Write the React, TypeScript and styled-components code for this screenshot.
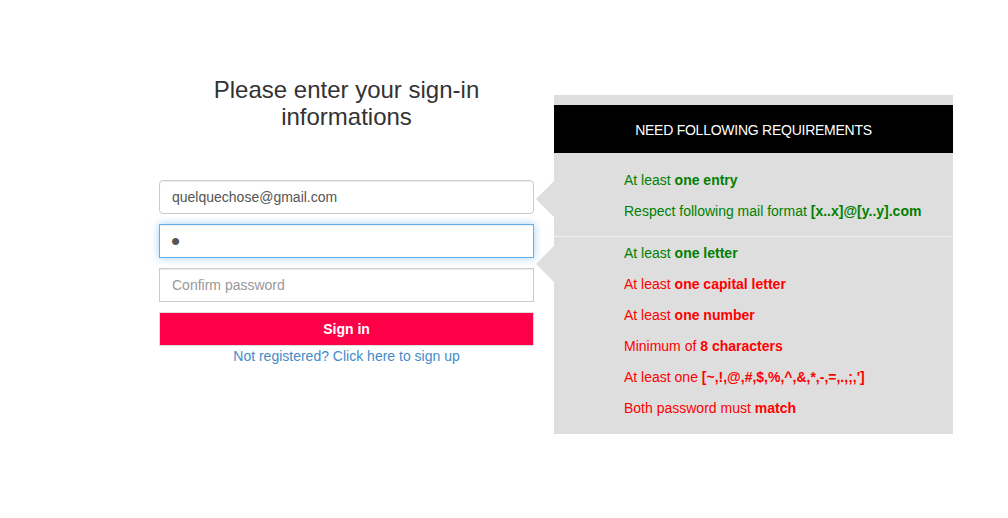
import React from "react";
import styled, { createGlobalStyle, css } from "styled-components";

const GlobalStyle = createGlobalStyle`
  html, body {
    margin: 0;
    padding: 0;
    background: #ffffff;
    font-family: "Liberation Sans", Arial, sans-serif;
    font-size: 14px;
    color: #333333;
  }
  * { box-sizing: border-box; }
`;

const Page = styled.div`
  display: flex;
  align-items: flex-start;
  padding-left: 159px;
  width: 1008px;
  height: 518px;
`;

const FormColumn = styled.div`
  width: 375px;
  padding-top: 77px;
  display: flex;
  flex-direction: column;
`;

const Title = styled.h3`
  margin: 0 auto 50px;
  width: 300px;
  font-size: 24px;
  line-height: 26.5px;
  font-weight: 400;
  text-align: center;
  color: #333333;
`;

const Fields = styled.div`
  display: flex;
  flex-direction: column;
  gap: 10px;
`;

const Input = styled.input<{ $rounded?: boolean; $focused?: boolean; $masked?: boolean }>`
  display: block;
  width: 100%;
  height: 34px;
  padding: ${(p) => (p.$masked ? "0 11px" : "6px 12px")};
  font-family: "Liberation Sans", Arial, sans-serif;
  font-size: ${(p) => (p.$masked ? "26px" : "14px")};
  color: #555555;
  background: #ffffff;
  border: 1px solid #cccccc;
  border-radius: ${(p) => (p.$rounded ? "4px" : "0")};
  box-shadow: inset 0 1px 1px rgba(0, 0, 0, 0.075);
  outline: none;
  &::placeholder { color: #999999; font-size: 14px; }
  ${(p) =>
    p.$focused &&
    css`
      border-color: #66afe9;
      box-shadow: inset 0 1px 1px rgba(0, 0, 0, 0.075),
        0 0 8px rgba(102, 175, 233, 0.6);
    `}
`;

const SubmitButton = styled.button`
  display: block;
  width: 100%;
  height: 34px;
  background: #ff0048;
  border: 1px solid #dcdcdc;
  color: #ffffff;
  font-family: "Liberation Sans", Arial, sans-serif;
  font-size: 14px;
  font-weight: 700;
  cursor: pointer;
`;

const SignUpLink = styled.a`
  display: block;
  text-align: center;
  color: #428bca;
  font-size: 14px;
  line-height: 20px;
  text-decoration: none;
`;

const Panel = styled.div`
  position: relative;
  margin-top: 95px;
  margin-left: 20px;
  width: 399px;
  background: #dedede;
  padding: 10px 0 10px;
`;

const PanelHeader = styled.div`
  height: 48px;
  padding-top: 2px;
  background: #000000;
  color: #ffffff;
  display: flex;
  align-items: center;
  justify-content: center;
  font-size: 14px;
  letter-spacing: -0.25px;
`;

const Group = styled.ul<{ $top: number; $bottom: number }>`
  list-style: none;
  margin: 0;
  padding: ${(p) => p.$top}px 0 ${(p) => p.$bottom}px 70px;
`;

const Separator = styled.div`
  height: 1px;
  background: #f2f2f2;
`;

const Rule = styled.li<{ $ok: boolean }>`
  height: 31px;
  line-height: 31px;
  font-size: 14px;
  color: ${(p) => (p.$ok ? "#008000" : "#ff0000")};
  b { font-weight: 700; }
`;

const Arrow = styled.div<{ $top: number }>`
  position: absolute;
  left: -18px;
  top: ${(p) => p.$top}px;
  width: 0;
  height: 0;
  border-top: 18px solid transparent;
  border-bottom: 18px solid transparent;
  border-right: 18px solid #dedede;
`;

const emailRules = [
  { ok: true, text: "At least ", bold: "one entry" },
  { ok: true, text: "Respect following mail format ", bold: "[x..x]@[y..y].com" },
];

const passwordRules = [
  { ok: true, text: "At least ", bold: "one letter" },
  { ok: false, text: "At least ", bold: "one capital letter" },
  { ok: false, text: "At least ", bold: "one number" },
  { ok: false, text: "Minimum of ", bold: "8 characters" },
  { ok: false, text: "At least one ", bold: "[~,!,@,#,$,%,^,&,*,-,=,.,;,']" },
  { ok: false, text: "Both password must ", bold: "match" },
];

export default function App() {
  return (
    <>
      <GlobalStyle />
      <Page>
        <FormColumn>
          <Title>Please enter your sign-in informations</Title>
          <Fields>
            <Input $rounded type="text" defaultValue="quelquechose@gmail.com" />
            <Input $focused $masked type="password" defaultValue="a" />
            <Input type="password" placeholder="Confirm password" />
            <div>
              <SubmitButton type="button">Sign in</SubmitButton>
              <SignUpLink href="#">Not registered? Click here to sign up</SignUpLink>
            </div>
          </Fields>
        </FormColumn>
        <Panel>
          <Arrow $top={86} />
          <Arrow $top={151} />
          <PanelHeader>NEED FOLLOWING REQUIREMENTS</PanelHeader>
          <Group $top={12} $bottom={9}>
            {emailRules.map((r, i) => (
              <Rule key={i} $ok={r.ok}>
                {r.text}
                <b>{r.bold}</b>
              </Rule>
            ))}
          </Group>
          <Separator />
          <Group $top={1} $bottom={0}>
            {passwordRules.map((r, i) => (
              <Rule key={i} $ok={r.ok}>
                {r.text}
                <b>{r.bold}</b>
              </Rule>
            ))}
          </Group>
        </Panel>
      </Page>
    </>
  );
}
